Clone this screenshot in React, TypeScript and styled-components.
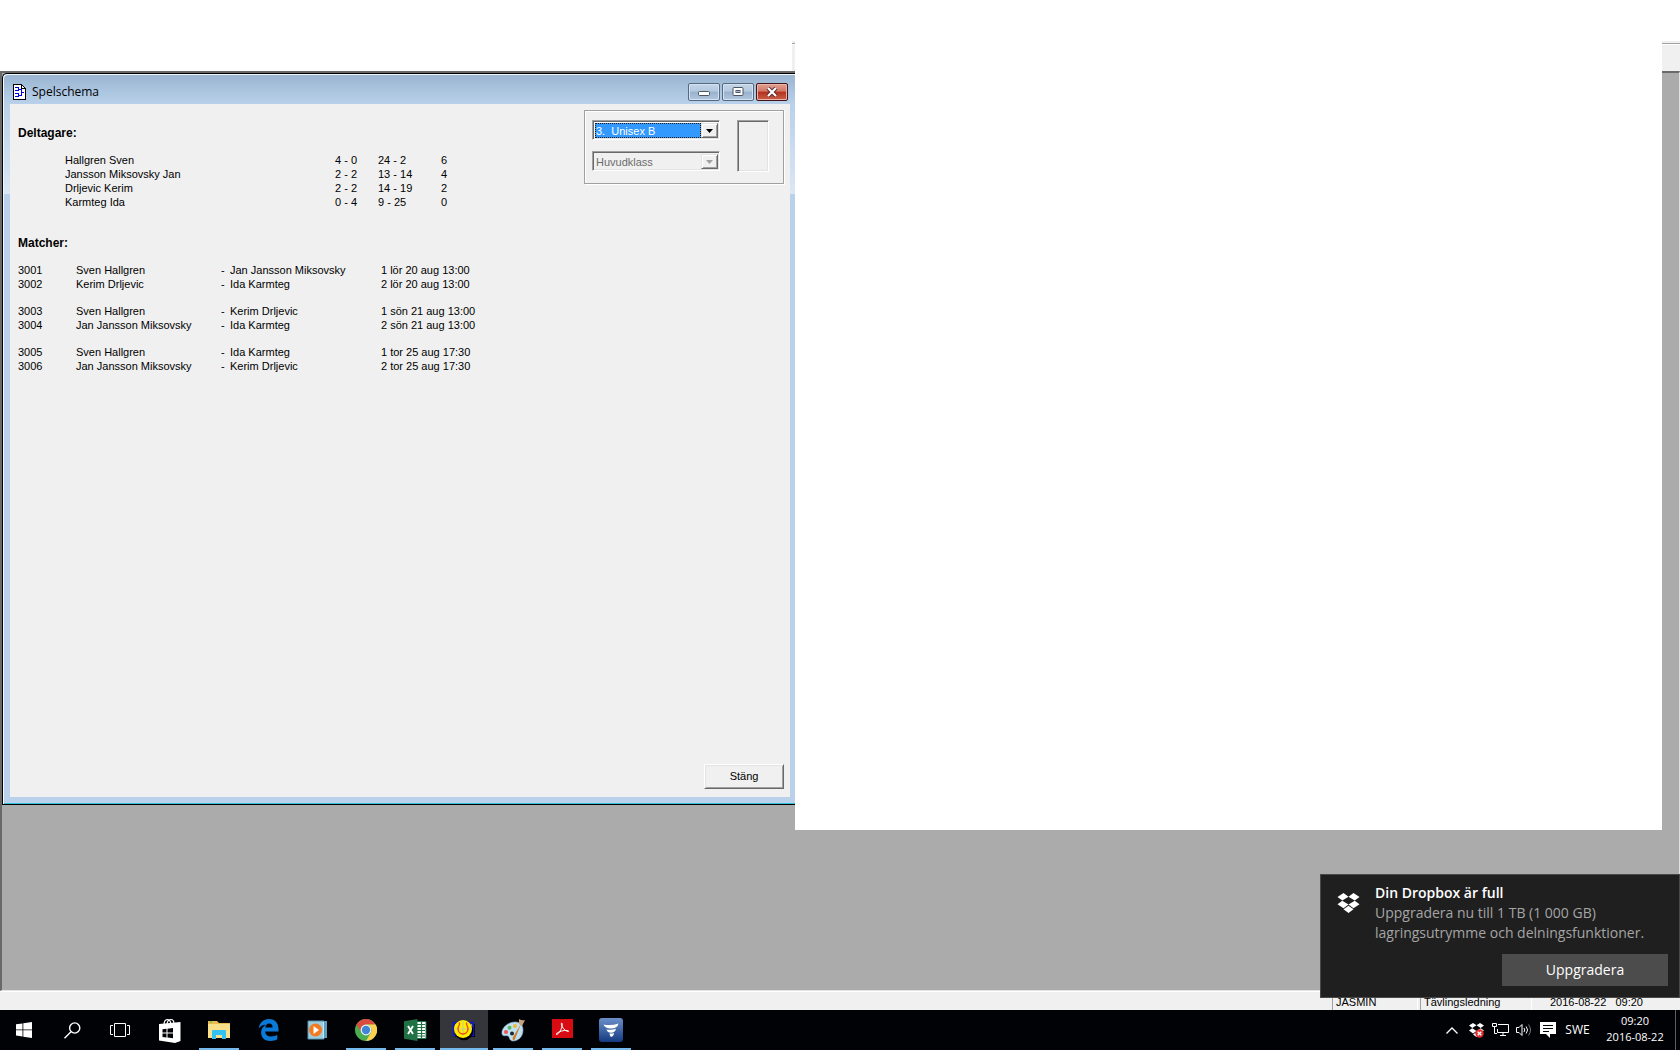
import React from "react";
import styled, { createGlobalStyle, css } from "styled-components";

const uiFont = '"Liberation Sans", Arial, sans-serif';
const shellFont = '"Open Sans", "Noto Sans", sans-serif';
const face = "#f0f0f0";

const GlobalStyle = createGlobalStyle`
  * { box-sizing: border-box; }
  body { margin: 0; background: #fff; color: #000; font: 11px/14px ${uiFont}; }
  button, select { font: inherit; color: inherit; margin: 0; padding: 0; border: 0; border-radius: 0; }
  svg { display: block; flex: none; }
`;

const Desktop = styled.div`
  position: relative;
  display: flex;
  flex-direction: column;
  min-height: 100vh;
`;

const ToolStrip = styled.div`
  display: grid;
  grid-template-columns: 792px 3px 1fr 18px;
  height: 30px;
  margin-top: 41px;
`;

const StripPiece = styled.div`
  background: linear-gradient(${face} 2px, #a0a0a0 2px 3px, #fff 3px 4px, ${face} 4px);
`;

const Workspace = styled.main`
  flex: 1;
  display: grid;
  grid-template-columns: 793px 1fr 17px;
  background: #ababab;
  border: solid;
  border-width: 2px 1px 1px 2px;
  border-color: #696969 #e3e3e3 #e3e3e3 #696969;
`;

const BlankSheet = styled.div`
  background: #fff;
  margin: -2px 0 160px;
`;

const Window = styled.section`
  display: flex;
  flex-direction: column;
  margin-bottom: 185px;
  padding: 0 5px 7px 7px;
  border: solid #000;
  border-width: 1px 0 1px 1px;
  border-top-left-radius: 5px;
  box-shadow: inset 1px 1px #f4f8fc, inset 0 -1px #33c3dd;
  background:
    linear-gradient(#99b4d1, #b9d1ea) 0 0 / 100% 30px no-repeat,
    linear-gradient(#b9d1ea, #dbe7f4) 0 30px / 100% 90px no-repeat,
    #b9d1ea;
`;

const TitleBar = styled.header`
  display: flex;
  align-items: center;
  gap: 6px;
  height: 30px;
  padding: 6px 2px 0 3px;
`;

const Title = styled.h1`
  flex: 1;
  margin: 0;
  font: 12px/16px ${shellFont};
`;

const CaptionButtons = styled.div`
  display: flex;
  gap: 2px;
  align-self: flex-start;
  padding-top: 3px;
`;

const CaptionButton = styled.button<{ $danger?: boolean }>`
  display: grid;
  place-items: center;
  width: 32px;
  height: 18px;
  border: 1px solid ${(p) => (p.$danger ? "#43141a" : "#54687f")};
  border-radius: 2px;
  box-shadow: inset 0 0 0 1px ${(p) => (p.$danger ? "#eab4a6" : "#d5e2f0")};
  background: ${(p) =>
    p.$danger
      ? "linear-gradient(#e3a093, #cf7868 45%, #b5301c 50%, #c9614a)"
      : "linear-gradient(#c3d4e7, #b5c9df 45%, #98b1cd 50%, #b1c7df)"};
`;

const Client = styled.div`
  flex: 1;
  display: flex;
  flex-direction: column;
  background: ${face};
  padding: 6px 6px 8px 8px;
`;

const Columns = styled.div`
  display: flex;
  justify-content: space-between;
  align-items: flex-start;
  flex: 1;
`;

const Lists = styled.div`
  padding-top: 16px;
`;

const Heading = styled.h2`
  margin: 0 0 13px;
  font: bold 12px/14px ${uiFont};
`;

const Table = styled.table<{ $indent?: boolean }>`
  table-layout: fixed;
  border-collapse: collapse;
  margin-left: ${(p) => (p.$indent ? 47 : 0)}px;
  margin-bottom: ${(p) => (p.$indent ? 27 : 0)}px;
  td { padding: 0; height: 14px; white-space: pre; }
  tbody + tbody::before { content: ""; display: table-row; height: 13px; }
`;

const Col = styled.col<{ $w: number }>`
  width: ${(p) => p.$w}px;
`;

const Filter = styled.div`
  display: flex;
  justify-content: space-between;
  width: 200px;
  height: 74px;
  padding: 9px 14px 9px 7px;
  border: 1px solid #a0a0a0;
  box-shadow: inset 1px 1px #fff, 1px 1px #fff;
`;

const Selects = styled.div`
  display: flex;
  flex-direction: column;
  gap: 11px;
`;

const sunken = css`
  border: 1px solid;
  border-color: #a0a0a0 #fff #fff #a0a0a0;
  box-shadow: inset 1px 1px #696969, inset -1px -1px #e3e3e3;
`;

const Combo = styled.label<{ $off?: boolean }>`
  display: flex;
  align-items: stretch;
  width: 128px;
  height: 20px;
  padding: 2px 1px 1px 2px;
  background: ${(p) => (p.$off ? face : "#fff")};
  ${sunken}
`;

const Select = styled.select`
  appearance: none;
  flex: 1;
  min-width: 0;
  padding-left: 1px;
  line-height: 14px;
  background: #3399ff;
  color: #fff;
  outline: 1px dotted #26160a;
  outline-offset: -1px;
  &:disabled { background: ${face}; color: #6d6d6d; outline: 0; opacity: 1; }
`;

const Drop = styled.span`
  display: grid;
  place-items: center;
  width: 17px;
  background: ${face};
  border: 1px solid;
  border-color: #e3e3e3 #696969 #696969 #e3e3e3;
  box-shadow: inset 1px 1px #fff, inset -1px -1px #a0a0a0;
`;

const Well = styled.div`
  width: 32px;
  height: 52px;
  ${sunken}
`;

const PushButton = styled.button`
  align-self: flex-end;
  width: 80px;
  height: 25px;
  padding-bottom: 2px;
  background: ${face};
  border: 1px solid;
  border-color: #fff #696969 #696969 #fff;
  box-shadow: inset 1px 1px #e3e3e3, inset -1px -1px #a0a0a0;
`;

const StatusBar = styled.footer`
  display: flex;
  justify-content: flex-end;
  gap: 2px;
  height: 19px;
  border-top: 1px solid #fff;
  background: ${face};
`;

const StatusCell = styled.div<{ $w: number; $plain?: boolean }>`
  width: ${(p) => p.$w}px;
  padding: 3px 0 0 ${(p) => (p.$plain ? 16 : 3)}px;
  white-space: pre;
  border: solid;
  border-width: ${(p) => (p.$plain ? 0 : "0 1px")};
  border-color: #a0a0a0 #fff #fff #a0a0a0;
`;

const Taskbar = styled.nav`
  display: flex;
  height: 40px;
  background: #010206;
  color: #fff;
`;

const TaskGroup = styled.div<{ $gap: number }>`
  display: flex;
  gap: ${(p) => p.$gap}px;
  margin-right: 2px;
`;

const TaskButton = styled.button<{ $open?: boolean; $active?: boolean }>`
  display: grid;
  place-items: center;
  width: 48px;
  height: 40px;
  background: ${(p) => (p.$active ? "#35363b" : "transparent")};
  background-image: ${(p) => (p.$open ? "linear-gradient(#76b9ed, #76b9ed)" : "none")};
  background-repeat: no-repeat;
  background-position: bottom;
  background-size: ${(p) => (p.$active ? 48 : 40)}px 2px;
`;

const Tray = styled.div`
  display: flex;
  align-items: center;
  margin-left: auto;
  font: 12px/16px ${shellFont};
`;

const TrayButton = styled.button<{ $w?: number }>`
  display: grid;
  place-items: center;
  width: ${(p) => p.$w ?? 24}px;
  height: 40px;
  background: none;
`;

const Clock = styled.button`
  width: 80px;
  padding-bottom: 2px;
  background: none;
  font-size: 11px;
  line-height: 16px;
  text-align: center;
`;

const ShowDesktop = styled.button`
  width: 5px;
  height: 40px;
  background: none;
  border-left: 1px solid #5c5d60;
`;

const Toast = styled.aside`
  position: absolute;
  right: 0;
  bottom: 52px;
  width: 360px;
  height: 124px;
  display: grid;
  grid-template-columns: 54px 1fr;
  grid-template-rows: 1fr 32px;
  padding: 8px 11px 11px 0;
  background: #1f1f1f;
  border: 1px solid #484848;
  color: #fff;
  font: 14px/20px ${shellFont};
`;

const ToastIcon = styled.div`
  padding: 9px 0 0 16px;
`;

const ToastTitle = styled.strong`
  display: block;
  font-weight: 600;
`;

const ToastText = styled.p`
  margin: 0;
  color: #a5a5a5;
  white-space: nowrap;
`;

const ToastButton = styled.button`
  grid-column: 2;
  justify-self: end;
  width: 166px;
  background: #4c4c4c;
`;

const DropboxIcon = ({ size = 23 }: { size?: number }) => (
  <svg width={size} height={size} viewBox="0 0 23 23" fill="#fff">
    <path d="M6.500 1 11.500 4.700 5.300 8.600.5 5zM16.500 1 22.500 5 17.700 8.600 11.500 4.700zM5.300 8.800 11.500 12.600 6.500 16.200.5 12.200zM17.700 8.800 22.500 12.200 16.500 16.200 11.500 12.600zM11.500 13.800 16.500 17.300 11.500 21 6.500 17.300z" />
  </svg>
);

const DocIcon = () => (
  <svg width="13" height="16" viewBox="0 0 13 16" shapeRendering="crispEdges">
    <path d="M.5.5h8l4 4v11H.5z" fill="#fff" stroke="#000" />
    <path d="M8.500.5v4h4" fill="none" stroke="#000" />
    <path d="M2 3.500h4M2 6.500h4M5.500 3.500v3M2 9.500h4M2 12.500h4M5.500 9.500v3M5.500 5.500h3M5.500 11.500h3M8.500 5.500v6M8.500 8.500H11" fill="none" stroke="#0000e0" />
  </svg>
);

const Arrow = ({ color }: { color: string }) => (
  <svg width="7" height="4" viewBox="0 0 7 4">
    <path d="M0 0h7L3.500 4z" fill={color} />
  </svg>
);

const icons: Record<string, React.ReactNode> = {
  Start: (
    <svg width="16" height="16" viewBox="0 0 16 16" fill="#fff">
      <path d="M0 2.300 6.500 1.400V7.500H0zM7.300 1.300 16 0v7.500H7.300zM0 8.300h6.500v6.200L0 13.600zM7.300 8.300H16V16l-8.700-1.300z" />
    </svg>
  ),
  Sök: (
    <svg width="17" height="17" viewBox="0 0 17 17" fill="none" stroke="#fff" strokeWidth="1.400">
      <circle cx="10.700" cy="6" r="5.100" />
      <path d="M7 9.700.5 16.200" />
    </svg>
  ),
  Aktivitetsvy: (
    <svg width="20" height="16" viewBox="0 0 20 16" fill="none" stroke="#fff">
      <path d="M4.500 1.500h11v13h-11zM3 3.500H.5v9H3M17 3.500h2.500v9H17" />
    </svg>
  ),
  Store: (
    <svg width="22" height="25" viewBox="0 0 22 25">
      <path d="M5 7c0-7 6-7 7-1M8 6c1-6 7-6 7 0" fill="none" stroke="#fff" strokeWidth="1.200" />
      <path d="M0 6 21.500 4v19L16 25 0 22.500z" fill="#fff" />
      <path d="M3.500 11.300 7.500 10.800v3.800h-4zM8.500 10.700 14 10v4.600H8.500zM3.500 15.600h4v3.900l-4-.4zM8.500 15.600H14v4.600l-5.500-.6z" fill="#010206" />
    </svg>
  ),
  Utforskaren: (
    <svg width="22" height="20" viewBox="0 0 22 20">
      <path d="M0 1h9l2 2h11v15H0z" fill="#e8bc4e" />
      <path d="M0 4h22v14H0z" fill="#fbe08a" />
      <path d="M2 1.500h2v1H2z" fill="#2ebd63" />
      <path d="M4 19v-8q0-1 1-1h12q1 0 1 1v8h-4v-4H8v4z" fill="#32c3f2" />
    </svg>
  ),
  Edge: (
    <svg width="21" height="22" viewBox="0 0 21 22">
      <path d="M.6 9.700C1.600 3.500 5.500 0 11 0c6.500 0 9.500 4.800 9.500 10.300v2.200H7.200c.1 3.800 3.300 5 6.200 5 2.400 0 4.300-.7 5.900-1.700v4.500c-1.900 1-4 1.600-6.700 1.600-6 0-9.500-3.400-9.500-8.500 0-3.300 1.800-6 4.900-7.600C4.600 5.900 2.300 7.200.6 9.700zM7.300 8.600h7.300c0-2.800-1.200-4.100-3.500-4.100-2.200 0-3.500 1.700-3.800 4.100z" fill="#0a7ad9" />
    </svg>
  ),
  Mediaspelare: (
    <svg width="21" height="20" viewBox="0 0 21 20">
      <path d="M5 1h15v17H5z" fill="#5c9fc1" />
      <path d="M1 1h16v18H1z" fill="#9dccdf" stroke="#5794b0" />
      <path d="M16.500 2v16" stroke="#cce8f4" />
      <circle cx="8.500" cy="10" r="6.500" fill="#f47a20" />
      <path d="M6.500 6v8l5.500-4z" fill="#fff" />
    </svg>
  ),
  Chrome: (
    <svg width="22" height="22" viewBox="0 0 22 22">
      <circle cx="11" cy="11" r="11" fill="#4aae50" />
      <path d="M1.500 5.500A11 11 0 0 1 20.500 5.500H11a5.500 5.500 0 0 0-5 7.300z" fill="#dc4b3e" />
      <path d="M11 22A11 11 0 0 0 20.600 5.500H11a5.500 5.500 0 0 1 4.800 8.300z" fill="#fdd14d" />
      <circle cx="11" cy="11" r="5.400" fill="#eef2f5" />
      <circle cx="11" cy="11" r="4.200" fill="#4285d6" />
    </svg>
  ),
  Excel: (
    <svg width="23" height="22" viewBox="0 0 23 22">
      <path d="M12 2.500h10v17H12z" fill="#fff" stroke="#207245" />
      <path d="M13 5.500h8M13 8.500h8M13 11.500h8M13 14.500h8M13 17h8M17.500 3v16" stroke="#207245" strokeWidth="1.200" />
      <path d="M0 2.300 13.500 0v22L0 19.700z" fill="#207245" />
      <path d="M4 7l5 8M9 7l-5 8" stroke="#fff" strokeWidth="1.900" />
    </svg>
  ),
  Tävling: (
    <svg width="24" height="22" viewBox="0 0 24 22">
      <path d="M3 5h20v13H3z" fill="#000" />
      <path d="M1.500 3.500h20v13h-20z" fill="#35363b" stroke="#1414d8" strokeWidth="1.600" />
      <path d="M3.500 5.500h16v9h-16z" fill="none" stroke="#b8b8d0" />
      <circle cx="12" cy="12" r="9.300" fill="#000" />
      <circle cx="11" cy="10" r="9" fill="#fff000" />
      <path d="M11 2v15M3 10h16" stroke="#c8c8a0" />
      <path d="M7 3.500c2 2-1 3-1 6 0 3.500 2.500 5.500 5 5.500s5-2 5-5.500c0-3-3-4-1-6" fill="none" stroke="#f04a10" strokeWidth="1.400" />
    </svg>
  ),
  Paint: (
    <svg width="24" height="24" viewBox="0 0 24 24">
      <path d="M1 16C0 10 7 4 14 4c5 0 8 3 8 8 0 7-5 11-10 11-4 0-3-4-5-5s-5 1-6-2z" fill="#bfe0f0" stroke="#83b6d2" strokeWidth=".6" />
      <circle cx="5" cy="14" r="2" fill="#e55" />
      <circle cx="8.500" cy="9.800" r="2" fill="#59b85e" />
      <circle cx="14" cy="8" r="2" fill="#f3b52d" />
      <circle cx="11" cy="15.500" r="2" fill="#172938" />
      <path d="M20 6 14 21q-1 2-2 1t0-3z" fill="#d47b28" />
      <path d="M18 1q3 2 6 1l-3 6-3-2z" fill="#c9a27c" />
    </svg>
  ),
  "Adobe Reader": (
    <svg width="21" height="22" viewBox="0 0 21 22">
      <path d="M0 0h21v19H0z" fill="#d90b12" />
      <path d="M4.500 15.500c1.500.5 6-6 5.700-10.500 0-1.500-1.200-1.200-.8.5.6 3 3.300 6.200 6.300 7 1.300.3 1.100-.8 0-1-3.600-.6-8.600.9-11 2.900-.5.400-.5.900-.2 1.100z" fill="none" stroke="#fff" />
    </svg>
  ),
  "F-Secure": (
    <svg width="24" height="24" viewBox="0 0 24 24">
      <defs>
        <linearGradient id="shield" x2="0" y2="1">
          <stop stopColor="#6b8fc9" />
          <stop offset="1" stopColor="#143b82" />
        </linearGradient>
      </defs>
      <rect width="24" height="24" rx="3" fill="url(#shield)" />
      <path d="M4.500 6.500Q12 8 19.500 5.500 18.500 10.500 12 10.500 6 10.500 4.500 6.500zM7.500 11.500q5 1 9.500-.8-.8 4-5 4-3.500 0-4.500-3.200zM10.500 15.500q2.500.2 4.500-.6-.3 3.500-3 4.100-1.300-1.500-1.500-3.500z" fill="#fff" />
    </svg>
  ),
};

const systemButtons = ["Start", "Sök", "Aktivitetsvy"];
const apps: { name: string; open?: boolean; active?: boolean }[] = [
  { name: "Store" },
  { name: "Utforskaren", open: true },
  { name: "Edge" },
  { name: "Mediaspelare" },
  { name: "Chrome", open: true },
  { name: "Excel", open: true },
  { name: "Tävling", open: true, active: true },
  { name: "Paint", open: true },
  { name: "Adobe Reader", open: true },
  { name: "F-Secure", open: true },
];

const players = [
  ["Hallgren Sven", "4 - 0", "24 - 2", "6"],
  ["Jansson Miksovsky Jan", "2 - 2", "13 - 14", "4"],
  ["Drljevic Kerim", "2 - 2", "14 - 19", "2"],
  ["Karmteg Ida", "0 - 4", "9 - 25", "0"],
];

const rounds = [
  [
    ["3001", "Sven Hallgren", "Jan Jansson Miksovsky", "1 lör 20 aug 13:00"],
    ["3002", "Kerim Drljevic", "Ida Karmteg", "2 lör 20 aug 13:00"],
  ],
  [
    ["3003", "Sven Hallgren", "Kerim Drljevic", "1 sön 21 aug 13:00"],
    ["3004", "Jan Jansson Miksovsky", "Ida Karmteg", "2 sön 21 aug 13:00"],
  ],
  [
    ["3005", "Sven Hallgren", "Ida Karmteg", "1 tor 25 aug 17:30"],
    ["3006", "Jan Jansson Miksovsky", "Kerim Drljevic", "2 tor 25 aug 17:30"],
  ],
];

function ScheduleWindow() {
  return (
    <Window>
      <TitleBar>
        <DocIcon />
        <Title>Spelschema</Title>
        <CaptionButtons>
          <CaptionButton aria-label="Minimera">
            <svg width="12" height="12" viewBox="0 0 12 12">
              <rect x=".5" y="5.500" width="11" height="4" rx="1" fill="#fff" stroke="#4b5563" />
            </svg>
          </CaptionButton>
          <CaptionButton aria-label="Maximera">
            <svg width="12" height="10" viewBox="0 0 12 10">
              <rect x="1" y=".5" width="10" height="8" rx="1" fill="#fff" stroke="#4b5563" />
              <rect x="4" y="3.500" width="4" height="2" fill="#a5bad2" stroke="#4b5563" />
            </svg>
          </CaptionButton>
          <CaptionButton aria-label="Stäng fönster" $danger>
            <svg width="12" height="10" viewBox="0 0 12 10">
              <path d="M2 1l8 8M10 1 2 9" stroke="#54272a" strokeWidth="4" />
              <path d="M2 1l8 8M10 1 2 9" stroke="#fff" strokeWidth="2.200" />
            </svg>
          </CaptionButton>
        </CaptionButtons>
      </TitleBar>
      <Client>
        <Columns>
          <Lists>
            <Heading>Deltagare:</Heading>
            <Table $indent>
              <colgroup>
                <Col $w={270} />
                <Col $w={43} />
                <Col $w={63} />
                <Col $w={20} />
              </colgroup>
              <tbody>
                {players.map((row) => (
                  <tr key={row[0]}>
                    {row.map((cell, i) => (
                      <td key={i}>{cell}</td>
                    ))}
                  </tr>
                ))}
              </tbody>
            </Table>
            <Heading>Matcher:</Heading>
            <Table>
              <colgroup>
                <Col $w={58} />
                <Col $w={145} />
                <Col $w={9} />
                <Col $w={151} />
                <Col $w={110} />
              </colgroup>
              {rounds.map((round) => (
                <tbody key={round[0][0]}>
                  {round.map(([id, home, away, time]) => (
                    <tr key={id}>
                      <td>{id}</td>
                      <td>{home}</td>
                      <td>-</td>
                      <td>{away}</td>
                      <td>{time}</td>
                    </tr>
                  ))}
                </tbody>
              ))}
            </Table>
          </Lists>
          <Filter>
            <Selects>
              <Combo>
                <Select aria-label="Klass">
                  <option>{"3.\u00a0\u00a0Unisex B"}</option>
                </Select>
                <Drop>
                  <Arrow color="#000" />
                </Drop>
              </Combo>
              <Combo $off>
                <Select aria-label="Typ" disabled>
                  <option>Huvudklass</option>
                </Select>
                <Drop>
                  <Arrow color="#a0a0a0" />
                </Drop>
              </Combo>
            </Selects>
            <Well />
          </Filter>
        </Columns>
        <PushButton>Stäng</PushButton>
      </Client>
    </Window>
  );
}

export default function App() {
  return (
    <Desktop>
      <GlobalStyle />
      <ToolStrip>
        <span />
        <StripPiece />
        <span />
        <StripPiece />
      </ToolStrip>
      <Workspace>
        <ScheduleWindow />
        <BlankSheet />
      </Workspace>
      <StatusBar>
        <StatusCell $w={86}>JASMIN</StatusCell>
        <StatusCell $w={112}>Tävlingsledning</StatusCell>
        <StatusCell $w={146} $plain>
          {"2016-08-22   09:20"}
        </StatusCell>
      </StatusBar>
      <Taskbar>
        <TaskGroup $gap={0}>
          {systemButtons.map((name) => (
            <TaskButton key={name} aria-label={name}>
              {icons[name]}
            </TaskButton>
          ))}
        </TaskGroup>
        <TaskGroup $gap={1}>
          {apps.map((app) => (
            <TaskButton key={app.name} aria-label={app.name} $open={app.open} $active={app.active}>
              {icons[app.name]}
            </TaskButton>
          ))}
        </TaskGroup>
        <Tray>
          <TrayButton aria-label="Visa dolda ikoner">
            <svg width="12" height="7" viewBox="0 0 12 7" fill="none" stroke="#fff" strokeWidth="1.300">
              <path d="M.5 6.500 6 1l5.500 5.500" />
            </svg>
          </TrayButton>
          <TrayButton aria-label="Dropbox">
            <svg width="15" height="15" viewBox="0 0 15 15">
              <path d="M4 0l3.500 2.300L3.300 5 0 2.500zM11 0l4 2.500L11.700 5 7.500 2.300zM3.300 5.300 7.500 8 4 10.500 0 7.500zM11.700 5.300 15 7.500 11 10.500 7.500 8zM7.500 9 11 11.500 7.500 14 4 11.500z" fill="#fff" />
              <circle cx="10.500" cy="10.500" r="4.200" fill="#df3030" />
              <path d="M8.700 8.700l3.600 3.600M12.300 8.700l-3.600 3.600" stroke="#fff" strokeWidth="1.300" />
            </svg>
          </TrayButton>
          <TrayButton aria-label="Nätverk">
            <svg width="17" height="14" viewBox="0 0 17 14" fill="none" stroke="#fff">
              <path d="M6 1.500h10.500v8h-11V6M8 12.500h6M11 9.500v3M.5.500h4v3h-4zM2.500 3.500v7H5" />
            </svg>
          </TrayButton>
          <TrayButton aria-label="Volym">
            <svg width="16" height="14" viewBox="0 0 16 14" fill="none" stroke="#fff">
              <path d="M.5 4.500H3l3-3v11l-3-3H.5zM8 5q1.500 2 0 4M10.200 3.500q2.700 3.500 0 7" />
              <path d="M12.500 1.500q4 5.500 0 11" stroke="#777" />
            </svg>
          </TrayButton>
          <TrayButton aria-label="Meddelanden">
            <svg width="16" height="16" viewBox="0 0 16 16">
              <path d="M0 0h16v12H10v4l-4-4H0z" fill="#fff" />
              <path d="M3 3.500h10M3 6.500h10M3 9.500h6" stroke="#010206" />
            </svg>
          </TrayButton>
          <TrayButton $w={35}>SWE</TrayButton>
          <Clock>
            09:20
            <br />
            2016-08-22
          </Clock>
          <ShowDesktop aria-label="Visa skrivbordet" />
        </Tray>
      </Taskbar>
      <Toast>
        <ToastIcon>
          <DropboxIcon />
        </ToastIcon>
        <div>
          <ToastTitle>Din Dropbox är full</ToastTitle>
          <ToastText>Uppgradera nu till 1 TB (1 000 GB)</ToastText>
          <ToastText>lagringsutrymme och delningsfunktioner.</ToastText>
        </div>
        <ToastButton>Uppgradera</ToastButton>
      </Toast>
    </Desktop>
  );
}
